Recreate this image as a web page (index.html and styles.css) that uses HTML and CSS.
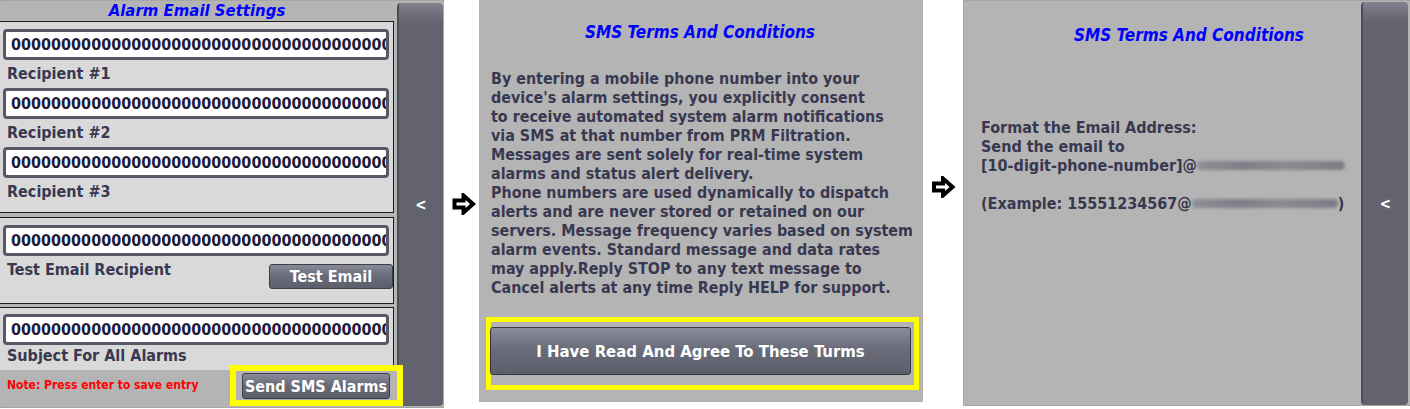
FILE: index.html
```html
<!DOCTYPE html>
<html>
<head>
<meta charset="utf-8">
<link rel="stylesheet" href="styles.css">
</head>
<body>
<div class="page">
  <section class="panel panel-settings">
    <div class="settings">
      <div class="title title-settings">Alarm Email Settings</div>
      <div class="box box-recipients">
        <div class="field"><span class="field-text">0000000000000000000000000000000000000000</span></div>
        <div class="label">Recipient #1</div>
        <div class="field"><span class="field-text">0000000000000000000000000000000000000000</span></div>
        <div class="label">Recipient #2</div>
        <div class="field"><span class="field-text">0000000000000000000000000000000000000000</span></div>
        <div class="label">Recipient #3</div>
      </div>
      <div class="box box-test">
        <div class="field"><span class="field-text">0000000000000000000000000000000000000000</span></div>
        <div class="test-row">
          <div class="label">Test Email Recipient</div>
          <button class="btn btn-test">Test Email</button>
        </div>
      </div>
      <div class="box box-subject">
        <div class="field"><span class="field-text">0000000000000000000000000000000000000000</span></div>
        <div class="label label-subject">Subject For All Alarms</div>
      </div>
      <div class="footer-row">
        <div class="note">Note: Press enter to save entry</div>
        <button class="btn btn-sms">Send SMS Alarms</button>
      </div>
    </div>
    <div class="sidebar"><span class="chev">&lt;</span></div>
  </section>

  <div class="gap gap-1">
    <svg class="arrow" viewBox="0 0 24 22" width="24" height="22"><path d="M2.5 7.5 H11.5 V2.5 L21 11 L11.5 19.5 V14.5 H2.5 Z" fill="#fff" stroke="#000" stroke-width="4" stroke-linejoin="miter"/></svg>
  </div>

  <section class="panel panel-terms">
    <div class="title title-terms">SMS Terms And Conditions</div>
    <p class="body-text">By entering a mobile phone number into your<br>device's alarm settings, you explicitly consent<br>to receive automated system alarm notifications<br>via SMS at that number from PRM Filtration.<br>Messages are sent solely for real-time system<br>alarms and status alert delivery.<br>Phone numbers are used dynamically to dispatch<br>alerts and are never stored or retained on our<br>servers. Message frequency varies based on system<br>alarm events. Standard message and data rates<br>may apply.Reply STOP to any text message to<br>Cancel alerts at any time Reply HELP for support.</p>
    <div class="highlight">
      <button class="btn btn-agree">I Have Read And Agree To These Turms</button>
    </div>
  </section>

  <div class="gap gap-2">
    <svg class="arrow" viewBox="0 0 24 22" width="25" height="22"><path d="M2.5 7.5 H11.5 V2.5 L21 11 L11.5 19.5 V14.5 H2.5 Z" fill="#fff" stroke="#000" stroke-width="4" stroke-linejoin="miter"/></svg>
  </div>

  <section class="panel panel-format">
    <div class="format">
      <div class="title title-format">SMS Terms And Conditions</div>
      <p class="body-text format-text">Format the Email Address:<br>Send the email to<br>[10-digit-phone-number]@<span class="smudge smudge-1"></span><br><br>(Example: 15551234567@<span class="smudge smudge-2"></span>)</p>
    </div>
    <div class="sidebar sidebar-format"><span class="chev">&lt;</span></div>
  </section>
</div>
</body>
</html>
```
FILE: styles.css
```css
html, body {
  margin: 0;
  padding: 0;
  background: #ffffff;
}
body {
  font-family: "DejaVu Sans Condensed", "DejaVu Sans", sans-serif;
  font-stretch: condensed;
  color: #383850;
}
.page {
  display: flex;
  align-items: flex-start;
  width: 1410px;
  height: 409px;
  overflow: hidden;
}
.panel {
  background: #b4b4b4;
  box-sizing: border-box;
}

/* ---------- panel 1 ---------- */
.panel-settings {
  width: 444px;
  height: 408px;
  border-top: 1px dotted #9a9a9a;
  border-right: 1px dotted #9a9a9a;
  border-bottom: 1px dotted #9a9a9a;
  display: flex;
}
.settings {
  width: 394px;
  display: flex;
  flex-direction: column;
}
.title {
  color: #0000ff;
  font-weight: bold;
  font-style: italic;
  font-size: 17px;
  line-height: 20px;
  text-align: center;
}
.title-settings {
  height: 20px;
  font-size: 16.6px;
}
.box {
  background: #d9d9d9;
  border-top: 1px solid #1e1e1e;
  border-right: 1px solid #1e1e1e;
  border-bottom: 1px solid #1e1e1e;
}
.box-recipients {
  padding: 7px 0 6px 0;
}
.box-test {
  margin-top: 4px;
  padding: 7px 0 14px 0;
}
.box-subject {
  margin-top: 3px;
  padding: 6px 0 0 0;
  border-bottom: none;
}
.field {
  box-sizing: border-box;
  height: 31px;
  margin: 0 4px 0 3px;
  background: #ffffff;
  border: 3px solid #575865;
  border-radius: 4px;
  padding: 0 0 0 5px;
  overflow: hidden;
  white-space: nowrap;
}
.field-text {
  display: block;
  font-weight: bold;
  font-size: 16px;
  line-height: 25px;
  color: #1c1c3a;
}
.label {
  height: 28px;
  line-height: 28px;
  padding-left: 7px;
  font-weight: bold;
  font-size: 16px;
}
.label-subject {
  height: 25px;
  line-height: 22px;
}
.test-row {
  display: flex;
  justify-content: space-between;
  align-items: flex-start;
}
.btn {
  font-family: inherit;
  font-stretch: condensed;
  font-weight: bold;
  color: #ffffff;
  border: 1px solid #3c3d4a;
  border-radius: 3px;
  background: linear-gradient(#8a8b99 0%, #6b6c7a 45%, #5d5e6b 100%);
  padding: 0;
  cursor: pointer;
}
.btn-test {
  width: 124px;
  height: 25px;
  margin-top: 8px;
  font-size: 16px;
}
.footer-row {
  display: flex;
  justify-content: space-between;
  align-items: flex-start;
  padding-top: 3px;
}
.note {
  color: #ff0000;
  font-weight: bold;
  font-size: 12px;
  line-height: 18px;
  padding-left: 7px;
  margin-top: 3px;
}
.btn-sms {
  position: relative;
  width: 148px;
  height: 26px;
  margin-right: 4px;
  font-size: 16px;
}
.btn-sms::after {
  content: "";
  position: absolute;
  top: -9px;
  bottom: -8px;
  left: -13px;
  right: -14px;
  border: 6px solid #ffff00;
}
.sidebar {
  width: 46px;
  margin: 2px 0 1px 3px;
  border-radius: 4px;
  border-left: 2px solid #4c4d5a;
  box-sizing: border-box;
  background: linear-gradient(#82838f 0px, #6a6b77 14px, #62636f 22px, #62636f 100%);
  display: flex;
  align-items: center;
  justify-content: center;
}
.chev {
  color: #ffffff;
  font-weight: bold;
  font-size: 15px;
  font-family: "DejaVu Sans", sans-serif;
}

/* ---------- gaps / arrows ---------- */
.gap {
  align-self: stretch;
  display: flex;
}
.gap-1 {
  width: 35px;
  padding: 193px 0 0 8px;
  box-sizing: border-box;
}
.gap-2 {
  width: 40px;
  padding: 176px 0 0 8px;
  box-sizing: border-box;
}
.arrow {
  display: block;
}

/* ---------- panel 2 ---------- */
.panel-terms {
  width: 444px;
  height: 402px;
  padding-top: 22px;
}
.title-terms {
  text-align: center;
  margin-left: -2px;
}
.body-text {
  margin: 0;
  font-weight: bold;
  font-size: 15.9px;
  line-height: 19px;
  color: #383850;
  white-space: nowrap;
}
.panel-terms .body-text {
  margin-top: 27px;
  padding-left: 12px;
}
.highlight {
  box-sizing: border-box;
  width: 433px;
  height: 73px;
  margin: 20px 0 0 7px;
  border: 5px solid #ffff00;
  padding-top: 5px;
}
.btn-agree {
  display: block;
  width: 421px;
  height: 48px;
  margin-left: -1px;
  font-size: 16.6px;
  border-color: #353642;
}

/* ---------- panel 3 ---------- */
.panel-format {
  flex: 1;
  height: 406px;
  border-top: 1px dotted #9a9a9a;
  border-left: 1px dotted #9a9a9a;
  border-bottom: 1px dotted #9a9a9a;
  display: flex;
}
.format {
  width: 397px;
  padding-top: 24px;
}
.title-format {
  text-align: left;
  padding-left: 110px;
}
.format-text {
  margin-top: 73px;
  padding-left: 17px;
  font-size: 16px;
}
.smudge {
  display: inline-block;
  height: 9px;
  vertical-align: 1px;
  border-radius: 5px;
  background: linear-gradient(90deg, #8e8e96, #7e7e88 30%, #8a8a92 60%, #7c7c86);
  filter: blur(1.8px);
}
.smudge-1 {
  width: 148px;
}
.smudge-2 {
  width: 146px;
}
.sidebar-format {
  width: 47px;
  margin: 1px 1px 0 0;
  height: 403px;
}
```
